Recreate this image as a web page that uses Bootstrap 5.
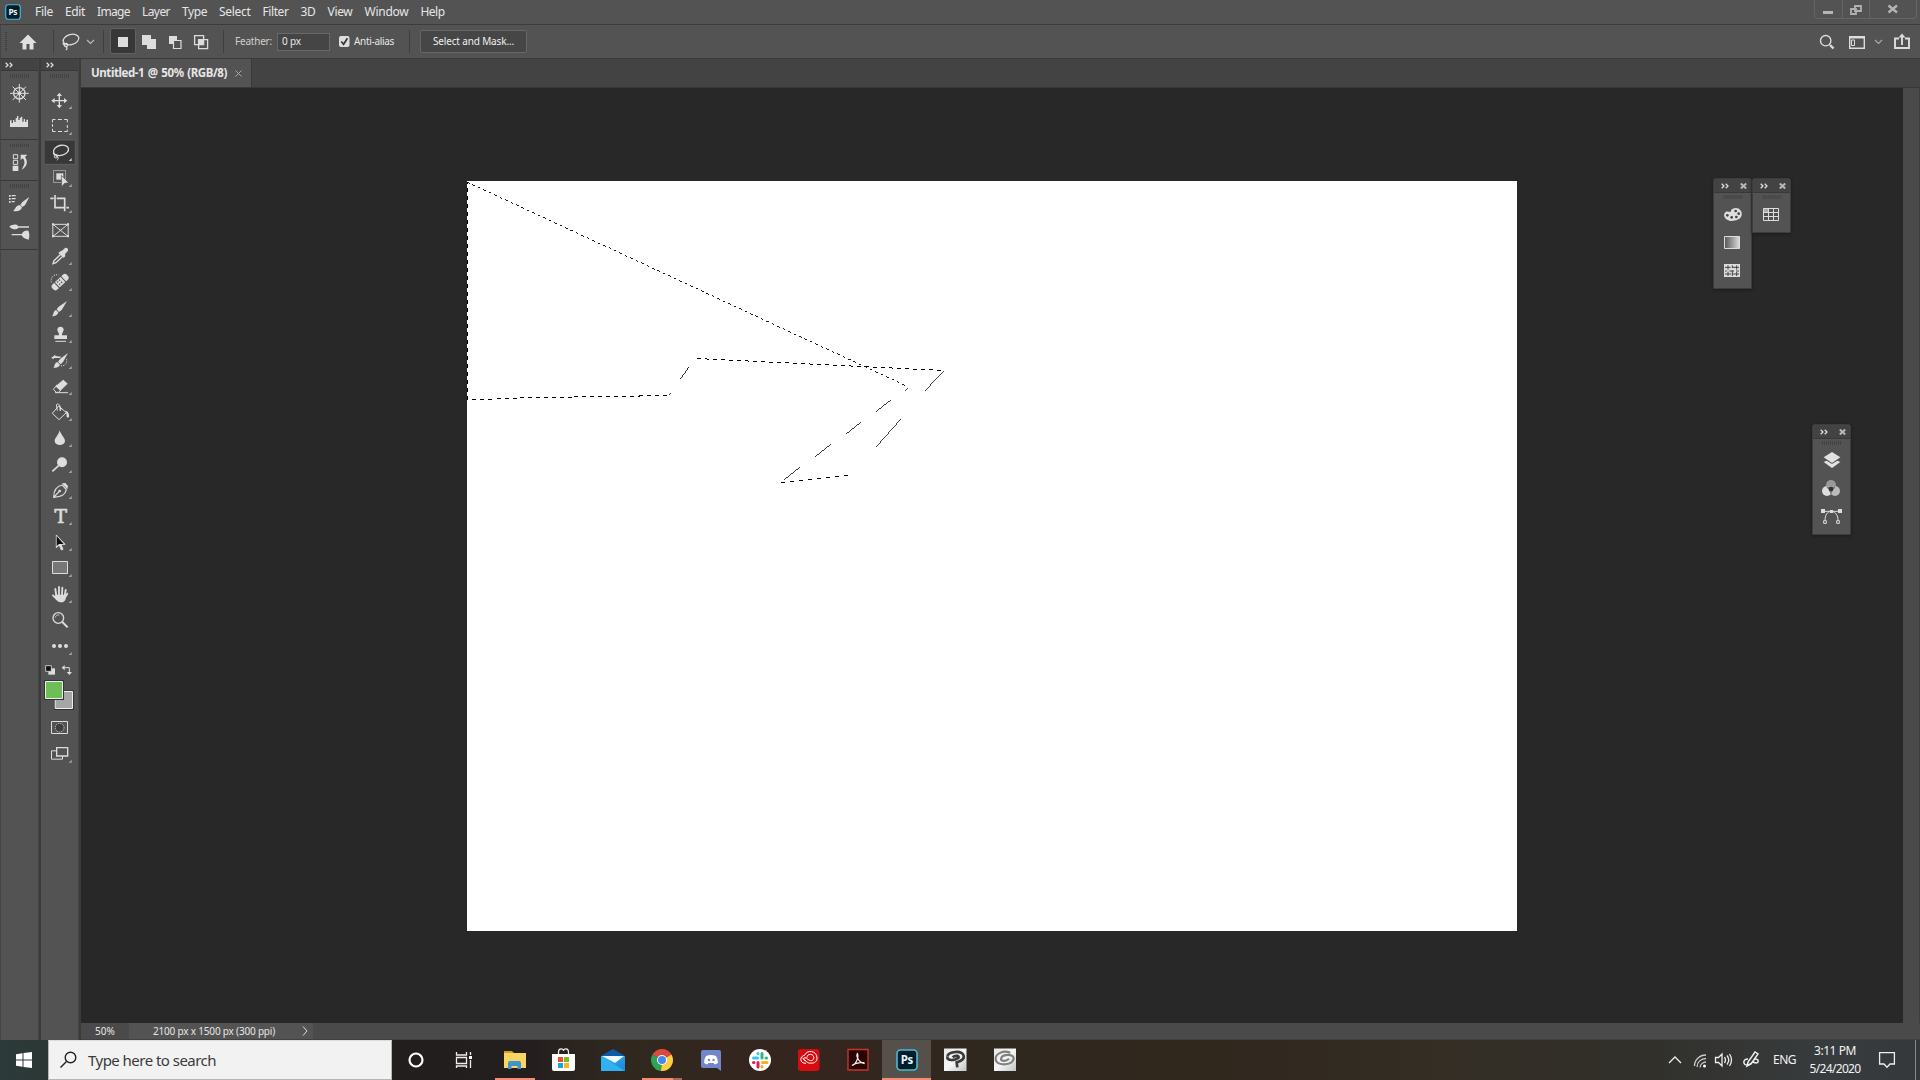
<!DOCTYPE html>
<html lang="en">
<head>
<meta charset="utf-8">
<title>Untitled-1 @ 50% (RGB/8)</title>
<link href="https://cdn.jsdelivr.net/npm/bootstrap@5.3.0/dist/css/bootstrap.min.css" rel="stylesheet">
<style>
body{width:1920px;height:1080px;overflow:hidden;background:#535353;color:#e6e6e6;font-family:"Noto Sans","Open Sans",sans-serif;font-size:12px;line-height:1}
svg{display:block;flex:none;overflow:hidden}
[data-w]{white-space:nowrap;display:inline-block;flex:none}
.menubar{height:25px;border-bottom:1px solid #3c3c3c;padding-left:5px}
.menus{gap:12px;margin-left:14px}
.menus span{line-height:24px}
.winbtns{width:103px;height:19px;border:1px solid #656565;border-top:0;border-radius:0 0 4px 4px;margin-right:3px}
.optbar{height:34px;border-bottom:1px solid #3a3a3a;font-size:10px;border-left:1px solid #454545}
.optbar>[data-w]{margin-bottom:1px}
.vsep{width:1px;height:23px;background:#3f3f3f;flex:none}
.feather{width:53px;height:18px;border:1px solid #686868;background:#454545;padding-left:4px;line-height:15px}
.maskbtn{width:107px;height:23px;border:1px solid #666;border-radius:2px;background:#464646;color:#eee;font-size:10px;line-height:19px}
.workspace{height:981px}
.sidecol{background:#535353;flex:none;height:981px}
.colhead{height:12px;background:#434343;border-bottom:1px solid #383838}
.coledge{width:3px;background:#3b3b3b;border-left:1px solid #474747;flex:none}
.tabstrip{height:29px;background:#434343;border-bottom:1px solid #383838}
.doctab{width:171px;height:28px;background:#535353;border-right:1px solid #383838;padding-left:10px;font-weight:700;font-size:11.5px;word-spacing:1px}
.stage{background:#282828;height:935px}
.artboard{background:#fff;width:1050px;height:750px;margin:93px 0 0 386px}
.vscroll{width:17px;background:#4a4a4a;border-right:1px solid #3e3e3e}
.statusbar{height:17px;background:#4a4a4a;border-bottom:1px solid #404040;font-size:10px}
.docsize{background:#535353;width:184px;height:16px}
.floatpanel{position:absolute;background:#535353;border:1px solid #3d3d3d;border-radius:3px 3px 0 0;box-shadow:0 1px 3px #1c1c1c}
.taskbar{height:40px;background:linear-gradient(90deg,#2c3a39 0,#2b3735 48px,#211e1d 392px,#241f1f 530px,#30281f 620px,#35251f 800px,#2f281e 980px,#30271d 1200px,#342e25 1450px,#31302b 1650px,#383c3e 1830px,#34383a 1920px)}
.searchbox{width:344px;height:40px;background:#f2f2f2;border:1px solid #b5b5b5;border-top-color:#ddd;color:#3a3a3a;font-size:15px}
.app{width:49px;height:40px;flex:none}
.app.active{background:#55504a;box-shadow:inset 0 -2px #f58d73}
.running{background:linear-gradient(#f58d73,#f58d73) 5px 38px/40px 2px no-repeat}
.tray{font-size:12px;color:#f3f3f3}
</style>
<script src="https://cdn.jsdelivr.net/npm/bootstrap@5.3.0/dist/js/bootstrap.bundle.min.js"></script>
</head>
<body>
<svg width="0" height="0" class="position-absolute">
<defs>
<symbol id="chev" viewBox="0 0 8 6"><path d="M.7.7 3 3 .7 5.3M4.7.7 7 3 4.7 5.3" fill="none" stroke="#ddd" stroke-width="1.3"/></symbol>
<symbol id="close" viewBox="0 0 7 6"><path d="M.8.5 6.2 5.5M6.2.5.8 5.5" stroke="#b8b8b8" stroke-width="2"/></symbol>
<symbol id="ps" viewBox="0 0 22 22"><rect x="1" y="1" width="20" height="20" rx="3.500" fill="#001d2a" stroke="#4cb9dc" stroke-width="1.600"/><text x="11" y="15.200" text-anchor="middle" font-size="11.500" font-weight="700" fill="#e4f5fb" font-family="Noto Sans" textLength="12.500">Ps</text></symbol>
<linearGradient id="gr"><stop stop-color="#555"/><stop offset="1" stop-color="#ddd"/></linearGradient>
<linearGradient id="ml" x2="1" y2="1"><stop stop-color="#2fb0f2"/><stop offset="1" stop-color="#1b86d8"/></linearGradient>
<linearGradient id="fw" x2="1" y2="1"><stop stop-color="#e8e8e8"/><stop offset=".5" stop-color="#f6f6f6"/><stop offset="1" stop-color="#c4c4c4"/></linearGradient>
</defs></svg>

<header class="menubar d-flex align-items-start">
 <svg width="16" height="16" style="margin-top:4px"><use href="#ps"/></svg>
 <nav class="menus d-flex">
  <span data-w="18">File</span><span data-w="20">Edit</span><span data-w="33">Image</span><span data-w="28">Layer</span><span data-w="25">Type</span><span data-w="31.5">Select</span><span data-w="26">Filter</span><span data-w="15">3D</span><span data-w="25">View</span><span data-w="44">Window</span><span data-w="24">Help</span>
 </nav>
 <div class="winbtns ms-auto"><svg width="101" height="18" viewBox="1815 0 101 18"><path d="M1842.500 0v18M1869.500 0v18" stroke="#656565"/><path d="M1823 11h10v3h-10z" fill="#b5b5b5"/><path d="M1855 6h6v5h-6zM1851 9h5v5h-5z" fill="none" stroke="#b0b0b0" stroke-width="1.800"/><path d="m1888.500 5.500 8.500 7m0-7-8.500 7" stroke="#b5b5b5" stroke-width="2.300"/></svg></div>
</header>

<div class="optbar d-flex align-items-center">
 <svg width="52" height="33" viewBox="1 25 52 33"><path d="M6 32v20" stroke="#3f3f3f" stroke-width="2" stroke-dasharray="1 1"/><path d="M28 34.500 19.500 43h3v6.500h4V44h3v5.500h4V43h3z" fill="#e0e0e0"/></svg>
 <div class="vsep"></div>
 <svg width="49" height="33" viewBox="54 25 49 33"><g fill="none" stroke="#ddd" stroke-width="1.300"><ellipse cx="71" cy="39.500" rx="8" ry="5" transform="rotate(-16 71 39.500)"/><circle cx="66" cy="45" r="1.600"/><path d="M65.500 46.500c2 1 2 2 .5 3.500M63 43c0 1 1 2 2 2.500"/></g><path d="m87 40 3.500 3.500 3.500-3.500" fill="none" stroke="#bbb" stroke-width="1.200"/></svg>
 <div class="vsep"></div>
 <svg width="119" height="33" viewBox="104 25 119 33"><rect x="110.500" y="28.500" width="25" height="25" rx="2" fill="#383838" stroke="#626262"/><path d="M118 37h10v10h-10zM142 35h9v4h5v10h-9v-4h-5z" fill="#ddd"/><path d="M169 36h8v4h-4v4h-4z" fill="#ddd"/><path d="M173.500 40.500h7.500v8h-7.500z" fill="#535353" stroke="#ddd" stroke-width="1.200"/><path d="M194.600 35.600h9v9h-9zM198.600 39.600h9v9h-9z" fill="none" stroke="#ddd" stroke-width="1.300"/><path d="M199 40h4.500v4.500H199z" fill="#ddd"/></svg>
 <div class="vsep"></div>
 <label data-w="37" style="margin-left:11px;color:#cfcfcf">Feather:</label>
 <div class="feather" style="margin-left:5px"><span data-w="19">0 px</span></div>
 <svg width="11" height="11" viewBox="0 0 11 11" style="margin-left:9px"><rect width="10.500" height="11" rx="2" fill="#ddd"/><path d="m2.300 5.500 2.300 2.800 3.800-6" fill="none" stroke="#333" stroke-width="1.600"/></svg>
 <span data-w="40" style="margin-left:4px">Anti-alias</span>
 <div class="vsep" style="margin-left:15px"></div>
 <button class="maskbtn p-0" style="margin-left:10px"><span data-w="81">Select and Mask...</span></button>
 <svg class="ms-auto" width="110" height="33" viewBox="1810 25 110 33"><g fill="none" stroke="#ddd"><circle cx="1825.700" cy="40.700" r="5.200" stroke-width="1.400"/><path d="m1830 45 3.500 3.500" stroke-width="2.400"/><path d="M1849.700 36.700h14.600v11.600h-14.600z" stroke-width="1.400"/><path d="M1849 37.500h16" stroke-width="2"/><path d="M1851.500 40h3v5.500h-3z"/><path d="m1875 40 3.500 3.500 3.500-3.500" stroke="#aaa" stroke-width="1.200"/><path d="M1899 38.500h-4V48h14v-9.500h-4M1902 45V36" stroke-width="1.900"/></g><path d="m1898.500 37.500 3.500-4 3.500 4z" fill="#ddd"/></svg>
</div>

<main class="workspace d-flex">
 <div style="width:1px;background:#454545"></div>
 <aside class="sidecol" style="width:37px">
  <div class="colhead" style="padding:3px 0 0 4px"><svg width="8" height="6"><use href="#chev"/></svg></div>
  <svg width="37" height="180" viewBox="3 33 111 540">
   <g stroke="#424242" stroke-width="10" stroke-dasharray="3 3"><path d="M30 48h57M30 256h57M30 378h57"/></g>
   <path d="M0 238.500h118M0 361.500h118M0 568.500h118" stroke="#393939" stroke-width="3"/>
   <g stroke="#ddd" fill="none"><circle cx="58" cy="100" r="17" stroke-width="4"/><circle cx="58" cy="100" r="4" stroke-width="4"/><path d="M58 72v56M30 100h56M38 80l40 40M78 80l-40 40" stroke-width="3"/></g>
   <path d="M30 201v-20h5v8h4v-9h4v6h4v-12h4v-6h4v12h4v-7h4v-3h4v15h4v-8h4v9h4v-7h5v22z" fill="#ddd"/>
   <path d="M40 284h13v12H40zM40 301h13v12H40z" stroke="#ddd" stroke-width="3" fill="none"/><path d="M38 317h17v16H38zM82 284H62v16l6-5c7 6 7 18 1 26l-4 8c17-9 20-25 10-38z" fill="#ddd"/>
   <path d="M27 405h5v5h-5zm8 0h12v4H35zm-8 9h5v5h-5zm8 0h12v4H35zm-8 9h5v5h-5zm8 0h9v4h-9zM88 411 75 436l-8 5-6-7 6-8zM59 435l7 7c-2 9-13 14-27 11 7-4 7-16 20-18zM29 498c8-4 20-8 25 0l1 1h32v4H55c-5 8-18 6-26-2zM35 522h30c4-8 12-11 20-10 4 8 4 17 1 27-9-2-18-5-21-13H35z" fill="#ddd"/>
  </svg>
 </aside>
 <div class="coledge"></div>
 <aside class="sidecol" style="width:37px">
  <div class="colhead" style="padding:3px 0 0 4.500px"><svg width="8" height="6"><use href="#chev"/></svg></div>
  <svg width="37" height="16" viewBox="41 71 37 16"><path d="M50 76h19" stroke="#424242" stroke-width="4" stroke-dasharray="1 1"/></svg>
  <div class="tools">
   <svg width="37" height="26" viewBox="123 81 111 78"><path d="M178 104v36M160 122h36" stroke="#ddd" stroke-width="4"/><path d="m178 98 8 10h-16zm0 47 8-10h-16zM154 122l10-8v16zm48 0-10-8v16z" fill="#ddd"/><path d="M215 138v9h-9z" fill="#aaa"/></svg>
   <svg width="37" height="26" viewBox="123 159 111 78"><path d="M157.500 187v-8.500h9m7 0h12m7 0h9.500v8.500m0 8v9m0 5v5.500h-9m-7 0h-12m-7 0h-9.500v-8m0-6v-8" fill="none" stroke="#ddd" stroke-width="3"/><path d="M215 216v9h-9z" fill="#aaa"/></svg>
   <svg width="37" height="26" viewBox="123 237 111 78"><rect x="132" y="240" width="94" height="73" rx="5" fill="#383838" stroke="#606060" stroke-width="3"/><g fill="none" stroke="#ddd" stroke-width="4"><ellipse cx="183" cy="271" rx="23" ry="15" transform="rotate(-15 183 271)"/><circle cx="168" cy="289" r="5" stroke-width="3"/><path d="M160 279c0 4 3 9 13 9M168 288c8 3 8 8 3 13" stroke-width="3"/></g><path d="M215 294v9h-9z" fill="#ccc"/></svg>
   <svg width="37" height="26" viewBox="123 315 111 78"><path d="M160.500 331.500h36v36h-36z" fill="none" stroke="#ddd" stroke-width="3" stroke-dasharray="3 3"/><path d="M169 340h21v19h-21z" fill="#ddd"/><path d="m184 346 22 22-12 2-9 10z" fill="#ddd" stroke="#535353" stroke-width="2"/><path d="M215 372v9h-9z" fill="#aaa"/></svg>
   <svg width="37" height="26" viewBox="123 393 111 78"><path d="M151 415h10m-1-9M165 405v38h30M170 415h24v39m5-11h8" fill="none" stroke="#ddd" stroke-width="5"/><path d="M215 450v9h-9z" fill="#aaa"/></svg>
   <svg width="37" height="26" viewBox="123 471 111 78"><path d="M158.500 493h46v36h-46zM159 493l45 36m0-36-45 36" fill="none" stroke="#ddd" stroke-width="3"/><path d="M156 490h6v6h-6zm45 0h6v6h-6zm-45 36h6v6h-6zm45 0h6v6h-6z" fill="#ddd"/></svg>
   <svg width="37" height="26" viewBox="123 549 111 78"><path d="M184 581 162 602l-3 9 9-3 22-21" fill="none" stroke="#ddd" stroke-width="4"/><path d="m181 574 5-2 9-8c7-2 11 4 8 10l-8 8 1 7-5 4-16-14z" fill="#ddd"/><path d="M215 606v9h-9z" fill="#aaa"/></svg>
   <svg width="37" height="26" viewBox="123 627 111 78"><path d="M154 667c-3-14 7-26 21-22" fill="none" stroke="#ddd" stroke-width="3" stroke-dasharray="3 3"/><g transform="rotate(-43 180 666)"><rect x="150" y="656" width="60" height="21" rx="9" fill="#ddd"/><path d="M167 653v27M193 653v27" stroke="#535353" stroke-width="3"/><path d="M173 659h4v4h-4zm8 0h4v4h-4zm-8 9h4v4h-4zm8 0h4v4h-4z" fill="#444"/></g><path d="M215 684v9h-9z" fill="#aaa"/></svg>
   <svg width="37" height="26" viewBox="123 705 111 78"><path d="m201 723-16 27-8 6-7-8 6-8zM168 750l7 7c-3 10-10 12-19 12 6-6 3-16 12-19z" fill="#ddd"/><path d="M215 762v9h-9z" fill="#aaa"/></svg>
   <svg width="37" height="26" viewBox="123 783 111 78"><path d="M177 826c1-8-6-11-5-18 2-10 17-10 19 0 1 7-6 10-5 18h15v11h-38v-11z" fill="#ddd"/><path d="M166 844h32" stroke="#ddd" stroke-width="3"/><path d="M215 840v9h-9z" fill="#aaa"/></svg>
   <svg width="37" height="26" viewBox="123 861 111 78"><path d="m204 879-15 27-7 7-8-8 7-9zM172 906l8 8c-3 8-10 9-20 9 5-5 3-14 12-17zM153 894l13-10v4l18 2-4 4h-18v3z" fill="#ddd"/><path d="M200 898v10l-7 8-10 2" fill="none" stroke="#ddd" stroke-width="3" stroke-dasharray="3 4"/><path d="M215 918v9h-9z" fill="#aaa"/></svg>
   <svg width="37" height="26" viewBox="123 9 111 78"><path d="m190 29 13 12-22 21-15-13z" fill="#ddd"/><path d="m170 46 13 13-7 8h-7l-9-9z" fill="none" stroke="#ddd" stroke-width="3"/><path d="M165 68h39" stroke="#ddd" stroke-width="3"/><path d="M215 66v9h-9z" fill="#aaa"/></svg>
   <svg width="37" height="26" viewBox="123 87 111 78"><path d="m176 108 23 20-22 21-20-19zM172 122l-3-18c7-7 11 2 12 19" fill="none" stroke="#ddd" stroke-width="3"/><path d="M196 122c8-1 13 12 11 19-5 5-9-1-7-7zM180 106l5 12-6 4z" fill="#ddd"/><path d="M215 144v9h-9z" fill="#aaa"/></svg>
   <svg width="37" height="26" viewBox="123 165 111 78"><path d="M179 181c3 13 17 24 16 33-2 15-29 15-31 0-1-9 13-20 15-33z" fill="#ddd"/><path d="M215 222v9h-9z" fill="#aaa"/></svg>
   <svg width="37" height="26" viewBox="123 243 111 78"><circle cx="186" cy="277" r="15" fill="#ddd"/><path d="m176 287-19 17" stroke="#ddd" stroke-width="5"/><path d="M215 300v9h-9z" fill="#aaa"/></svg>
   <svg width="37" height="26" viewBox="123 321 111 78"><path d="m187 345 12 14c-3 16-15 21-38 23 0-21 6-33 26-37zM162 381l16-17" fill="none" stroke="#ddd" stroke-width="3.500"/><path d="m186 340 10-1 8 9-2 10z" fill="#ddd"/><circle cx="179" cy="363" r="4" fill="#ddd"/><path d="M215 378v9h-9z" fill="#aaa"/></svg>
   <svg width="37" height="26" viewBox="123 399 111 78"><text x="182.500" y="459" text-anchor="middle" font-family="DejaVu Serif" font-size="56" fill="#ddd" stroke="#ddd" stroke-width="2">T</text><path d="M215 456v9h-9z" fill="#aaa"/></svg>
   <svg width="37" height="26" viewBox="123 477 111 78"><path d="M169 495v38l9-8 6 15 5-2-6-15h12z" fill="#ddd" stroke="#ddd" stroke-width="3"/><path d="M170 498v30l7-6h14z" fill="#111"/><path d="M215 534v9h-9z" fill="#aaa"/></svg>
   <svg width="37" height="26" viewBox="123 555 111 78"><path d="M157.500 574.500h45v36h-45z" fill="#777" stroke="#ddd" stroke-width="3"/><path d="M215 612v9h-9z" fill="#aaa"/></svg>
   <svg width="37" height="26" viewBox="123 633 111 78"><path d="M169 678l-3-21M177 675v-24M186 675l1-22M194 678l3-18M171 688l-12-12M197 680l5-9" stroke="#ddd" stroke-width="5.500" stroke-linecap="round"/><path d="M166 674h31l1 9c-2 10-7 14-15 14-11 0-15-9-19-16z" fill="#ddd"/><path d="M215 690v9h-9z" fill="#aaa"/></svg>
   <svg width="37" height="26" viewBox="123 711 111 78"><circle cx="175" cy="744" r="16" fill="none" stroke="#ddd" stroke-width="4"/><path d="m187 756 16 16" stroke="#ddd" stroke-width="6"/><path d="M166 743c1-7 6-9 12-8" fill="none" stroke="#bbb" stroke-width="3"/></svg>
   <svg width="37" height="26" viewBox="123 789 111 78"><g fill="#ddd"><circle cx="162" cy="828" r="6"/><circle cx="180" cy="828" r="6"/><circle cx="198" cy="828" r="6"/></g><path d="M215 846v9h-9z" fill="#aaa"/></svg>
   <svg width="37" height="110" viewBox="123 867 111 330"><path d="M145 895h20v19h-20z" fill="#ddd"/><path d="M137 887h17v17h-17z" fill="#111" stroke="#ddd" stroke-width="2.500"/><path d="M191 893h17v17" fill="none" stroke="#ddd" stroke-width="3"/><path d="m185 893 9-8v16zm23 22-8-9h16z" fill="#ddd"/><path d="M162 961h60v59h-60z" fill="#333"/><path d="M165.500 964.500h52v51h-52z" fill="#a6a6a6" stroke="#eee" stroke-width="3"/><path d="M132 930h60v60h-60z" fill="#333"/><path d="M136.500 934.500h51v51h-51z" fill="#6dbe57" stroke="#eee" stroke-width="3"/><path d="M154.500 1054.500h48v36h-48z" fill="none" stroke="#ddd" stroke-width="3"/><circle cx="179" cy="1073" r="13" fill="#3f3f3f" stroke="#ddd" stroke-width="3" stroke-dasharray="3 3"/><path d="M154.500 1142.500h33v25h-33z" fill="none" stroke="#ddd" stroke-width="3"/><path d="M170 1133h33v25h-33z" fill="#535353" stroke="#ddd" stroke-width="4"/><path d="M215 1169v9h-9z" fill="#aaa"/></svg>
  </div>
 </aside>
 <div class="coledge"></div>
 <section class="flex-grow-1 d-flex flex-column">
  <div class="tabstrip d-flex">
   <div class="doctab d-flex align-items-center"><span data-w="136">Untitled-1 @ 50% (RGB/8)</span><svg width="7" height="7" viewBox="0 0 7 7" style="margin-left:8px"><path d="m.5.500 6 6m0-6-6 6" stroke="#aaa" stroke-width="1"/></svg></div>
  </div>
  <div class="d-flex">
   <div class="stage flex-grow-1">
    <div class="artboard">
     <svg width="1050" height="750" viewBox="467 181 1050 750" fill="none" stroke="#000" shape-rendering="crispEdges">
      <path d="M467.500 182v218" stroke-dasharray="4 4" stroke-dashoffset="2"/>
      <path d="M467 182 906.500 386" stroke-dasharray="2.800 3.200" stroke-width=".9"/>
      <path d="M472 399.500h20M497 398.500h20M520 397.500h55M574 396.500h66M639 395.500h28" stroke-dasharray="4 4"/>
      <path d="m697 358.500 246 12" stroke-dasharray="4 4"/>
      <path d="m781 482.500 68-7.500" stroke-dasharray="4 5"/>
      <path d="m680.300 379.200 8.600-12.200" stroke-width=".82"/>
      <path d="m943 370.500-19 20.500M901 419l-25 28M908 388l-3 3M669 395l2-2" stroke-width=".74"/>
      <path d="m891 400-15 11.500M861 422l-15 12M831 444l-16 13M800 467l-16 13" stroke-width=".79"/>
     </svg>
    </div>
   </div>
   <div class="vscroll"></div>
  </div>
  <div class="statusbar d-flex align-items-center">
   <div style="width:48px;padding-left:14px"><span data-w="20">50%</span></div>
   <div class="docsize d-flex align-items-center" style="padding-left:24px"><span data-w="122">2100 px x 1500 px (300 ppi)</span><svg width="6" height="10" viewBox="0 0 6 10" style="margin-left:27px"><path d="m1 .5 4 4.500-4 4.500" fill="none" stroke="#ddd"/></svg></div>
  </div>
 </section>
</main>

<footer class="taskbar d-flex">
 <svg width="48" height="40" viewBox="0 1040 48 40"><path d="m16 1054.300 6.500-1v6.200H16zm7.500-1.200 8.500-1.200v7.600h-8.500zM16 1060.500h6.500v6.200l-6.500-1zm7.500 0h8.500v7.600l-8.500-1.200z" fill="#fff"/></svg>
 <div class="searchbox d-flex align-items-center"><svg width="39" height="38" viewBox="49 1041 39 38"><circle cx="70.500" cy="1057.500" r="5.300" fill="none" stroke="#222" stroke-width="1.400"/><path d="m66.500 1061.500-6 6" stroke="#222" stroke-width="1.500"/></svg><span data-w="128">Type here to search</span></div>
 <svg class="app" viewBox="392 1040 49 40"><circle cx="416" cy="1060" r="6.500" fill="none" stroke="#fff" stroke-width="2.200"/></svg>
 <svg class="app" viewBox="441 1040 49 40"><path d="M456.500 1052v3h10v-3M456.500 1057.500h10v6h-10zM456.500 1068v-2h10v2M470.500 1052v3m0 5v8" fill="none" stroke="#eee" stroke-width="1.300"/><path d="M469 1056h3v3h-3z" fill="#fff"/></svg>
 <svg class="app running" viewBox="490 1040 49 40"><path d="M504 1051h8l2 2h-10z" fill="#d69c1b"/><path d="M504 1053h22v15h-22z" fill="#fbd461"/><path d="M508 1069v-6q0-2 2-2h9q2 0 2 2v6h-3.500v-3h-6v3z" fill="#3b95d3"/></svg>
 <svg class="app" viewBox="539 1040 49 40"><path d="M558.500 1055v-3c0-4 5-4 5-1 0-3 5-3 5 1v3" fill="none" stroke="#eee" stroke-width="1.200"/><path d="M552 1054h23v15q0 2-2 2h-19q-2 0-2-2z" fill="#fff"/><path d="M558 1057h5v5h-5z" fill="#e5532a"/><path d="M564 1057h5v5h-5z" fill="#7db829"/><path d="M558 1063h5v5h-5z" fill="#17a5e0"/><path d="M564 1063h5v5h-5z" fill="#fbb813"/></svg>
 <svg class="app" viewBox="588 1040 49 40"><path d="m601 1056 12-7 12 7z" fill="#0c5ba8"/><path d="M601 1056h24v15h-24z" fill="url(#ml)"/><path d="M602 1056h22l-9 7z" fill="#eef7fd"/><path d="m601 1056 24 15h-24z" fill="#31b1f1"/></svg>
 <svg class="app running" viewBox="637 1040 49 40"><path d="M662 1060 652.500 1054.500A11 11 0 0 1 671.500 1054.500z" fill="#dc4a3d"/><path d="M662 1060 652.500 1054.500A11 11 0 0 0 661 1071z" fill="#2fa354"/><path d="M662 1060l9.500-5.500A11 11 0 0 1 661 1071z" fill="#fdcf41"/><path d="M662 1049v6h10" fill="#dc4a3d"/><circle cx="662" cy="1060" r="5" fill="#fff"/><circle cx="662" cy="1060" r="4" fill="#4687f0"/><path d="M673 1078h9v2h-9z" fill="#a7695a"/></svg>
 <svg class="app" viewBox="686 1040 49 40"><path d="M703 1050h16q2 0 2 2v19l-4-3h-14q-2 0-2-2v-14q0-2 2-2z" fill="#7286cb"/><path d="M706 1056q5-2 10 0 2 3 2 7l-3 1.500-1.500-1.500h-5l-1.500 1.500-3-1.500q0-4 2-7z" fill="#fff"/><circle cx="709" cy="1060" r="1.200" fill="#7286cb"/><circle cx="713.500" cy="1060" r="1.200" fill="#7286cb"/></svg>
 <svg class="app" viewBox="735 1040 49 40"><circle cx="760" cy="1060" r="11" fill="#fff"/><g stroke-width="3" stroke-linecap="round"><path d="M753.500 1058h4M758 1053.500h.1" stroke="#36c5f0"/><path d="M762 1053.500v4.500M766 1058h.5" stroke="#2eb67d"/><path d="M762.500 1062.500h4.500M762 1066.500v.5" stroke="#ecb22e"/><path d="M758 1062.500v4.500M753.500 1062.500h.5" stroke="#e01e5a"/></g></svg>
 <svg class="app" viewBox="784 1040 49 40"><rect x="798" y="1049" width="21.500" height="22" rx="3" fill="#d80c10"/><g transform="translate(795 1040) scale(.3333)" fill="none" stroke="#fff" stroke-width="3"><path d="M33 70c-20 1-20-22-4-24 5-17 37-16 37 8 0 14-12 17-25 15-6-2-14-11-19-16M33 62c-9 0-9-9-3-9 7 0 10 9 17 9 14 0 12-19-1-19-7 0-10 5-10 9"/></g></svg>
 <svg class="app" viewBox="833 1040 49 40"><path d="M848 1049.500h20v20.500h-20z" fill="#290404" stroke="#c43429" stroke-width="1.400"/><path d="M852 1065.500c4-1 7-8.500 5.500-12-2 .5.500 9 6.500 10 2-1.500-8-1.500-12 2z" fill="none" stroke="#f5eaea" stroke-width="1.200"/></svg>
 <div class="app active d-flex justify-content-center" style="padding-top:9px"><svg width="22" height="22"><use href="#ps"/></svg></div>
 <svg class="app" viewBox="931 1040 49 40"><path d="M944 1048.500h22.500V1071H944z" fill="url(#fw)"/><path transform="translate(795 1040) scale(.3333)" d="M457 48c5-13 43-19 49-1 4 14-13 17-21 20l2 15M457 49c-2 16 24 12 33 5 5-6-8-10-17-2" fill="none" stroke="#3a3a3a" stroke-width="8"/></svg>
 <svg class="app" viewBox="980 1040 49 40"><path d="M994 1048.500h22V1071h-22z" fill="url(#fw)"/><path transform="translate(795 1040) scale(.3333)" d="M646 38c-21-9-46 4-44 20 3 22 54 19 54-4-1-15-37-11-38 3 1 8 18 7 24-1" fill="none" stroke="#808080" stroke-width="6.500"/></svg>
 <div class="tray ms-auto d-flex align-items-center">
  <svg width="108" height="40" viewBox="1665 1040 108 40"><g fill="none" stroke="#eee" stroke-width="1.300"><path d="m1669 1063 6-6 6 6"/><path d="M1694.500 1066c0-6 5-11 11.500-11M1697 1067c0-5 4-8.500 9-8.500M1700 1067.500c0-3 3-5.500 6-5.500" stroke="#ccc"/><path d="M1715.500 1057.500h3l3.500-3.500v12l-3.500-3.500h-3zM1724.500 1057q2 3 0 6M1727 1055.500q3.500 4.500 0 9M1729.500 1054q4 6 0 12"/><path d="M1748 1059c-6 0-5 7 0 6 6-1 5-9 10-5 1 4-3 3-5 2M1747 1066l1-4 7-10 3 2-7 10z" stroke-width="1.500"/></g><circle cx="1704.500" cy="1066" r="1.500" fill="#fff"/></svg>
  <span data-w="23">ENG</span>
  <div class="text-center" style="width:53px;margin-left:13px;padding-right:1px;line-height:18px"><span data-w="42">3:11 PM</span><br><span data-w="51">5/24/2020</span></div>
  <svg width="58" height="40" viewBox="1862 1040 58 40"><path d="M1879.600 1052.600h14.800v11.400h-4.400l-3 3.200-3-3.200h-4.400z" fill="none" stroke="#eee" stroke-width="1.300"/><path d="M1915.500 1040v40" stroke="#888"/></svg>
 </div>
</footer>

<div class="floatpanel" style="left:1713px;top:178px;width:39px;height:111px">
 <div class="colhead d-flex" style="height:14px;padding:4px 0 0 7px"><svg width="8" height="6"><use href="#chev"/></svg><svg width="7" height="6" style="margin-left:11px"><use href="#close"/></svg></div>
 <svg width="37" height="94" viewBox="42 69 111 282"><path d="M70 81h57" stroke="#424242" stroke-width="11" stroke-dasharray="3 3"/><path d="M97 117c16-9 31 4 28 19-4 16-26 18-37 16-14-3-21-18-11-26 7-5 14 3 16-2 2-3-2-4 4-7z" fill="#ddd"/><g fill="#444"><circle cx="82" cy="136" r="4"/><circle cx="95" cy="142" r="4"/><circle cx="109" cy="141" r="4"/><circle cx="116" cy="131" r="4"/><circle cx="107" cy="123" r="4"/></g><path d="M73.500 199.500h45v36h-45z" fill="url(#gr)" stroke="#ddd" stroke-width="3"/><path d="M72 282h48v39H72z" fill="#ddd"/><path d="M84 286v13m0 6v13M97 286v8m0 7v17M110 286v13m0 7v12M75 292h17m5 0h20M75 303h5m8 0h14m6 0h9M75 312h18m5 0h19" stroke="#444" stroke-width="3"/></svg>
</div>
<div class="floatpanel" style="left:1752px;top:178px;width:39px;height:55px">
 <div class="colhead d-flex" style="height:14px;padding:4px 0 0 7px"><svg width="8" height="6"><use href="#chev"/></svg><svg width="7" height="6" style="margin-left:11px"><use href="#close"/></svg></div>
 <svg width="37" height="39" viewBox="159 69 111 117"><path d="M187 81h57" stroke="#424242" stroke-width="11" stroke-dasharray="3 3"/><path d="M190.500 115.500h45v36h-45z" fill="#505050"/><path d="M190 115h15v12h-15z" fill="#aaa"/><path d="M190.500 115.500h45v36h-45zM190 127.500h46M190 139.500h46M205.500 115v36M220.500 115v36" fill="none" stroke="#ddd" stroke-width="3"/></svg>
</div>
<div class="floatpanel" style="left:1812px;top:424px;width:39px;height:111px">
 <div class="colhead d-flex" style="height:14px;padding:4px 0 0 7px"><svg width="8" height="6"><use href="#chev"/></svg><svg width="7" height="6" style="margin-left:11px"><use href="#close"/></svg></div>
 <svg width="37" height="94" viewBox="339 807 111 282"><path d="M366 819h57" stroke="#424242" stroke-width="11" stroke-dasharray="3 3"/><path d="m396 846 25 16-25 17-25-17z" fill="#e2e2e2"/><path d="m371 876 9-4 16 10 16-10 9 4-25 18z" fill="#e2e2e2"/><circle cx="393" cy="945" r="15" fill="#999"/><circle cx="381" cy="963" r="15" fill="#ddd"/><circle cx="405" cy="963" r="15" fill="#bbb"/><path d="M379 948q14 7 28 0-3 9-8 12l-6 15-6-15q-7-4-8-12z" fill="#777"/><circle cx="393" cy="957" r="7" fill="#333"/><path d="M375 1052c0-16 6-27 19-28 13 1 20 12 20 28M369 1024h50" fill="none" stroke="#ddd" stroke-width="3"/><path d="M363 1017h12v12h-12zm51 0h12v12h-12zm-24 3h9v9h-9z" fill="#ddd"/><path d="M371 1052h8v8h-8zm39 0h8v8h-8z" fill="#535353" stroke="#ddd" stroke-width="3"/></svg>
</div>

<script>
// Fit each label to its nominal UI width by adjusting the tracking.
document.querySelectorAll('[data-w]').forEach(function(el){
  var w=+el.dataset.w, natural=el.getBoundingClientRect().width;
  el.style.letterSpacing=((w-natural)/el.textContent.length)+'px';
});
</script>
</body>
</html>
